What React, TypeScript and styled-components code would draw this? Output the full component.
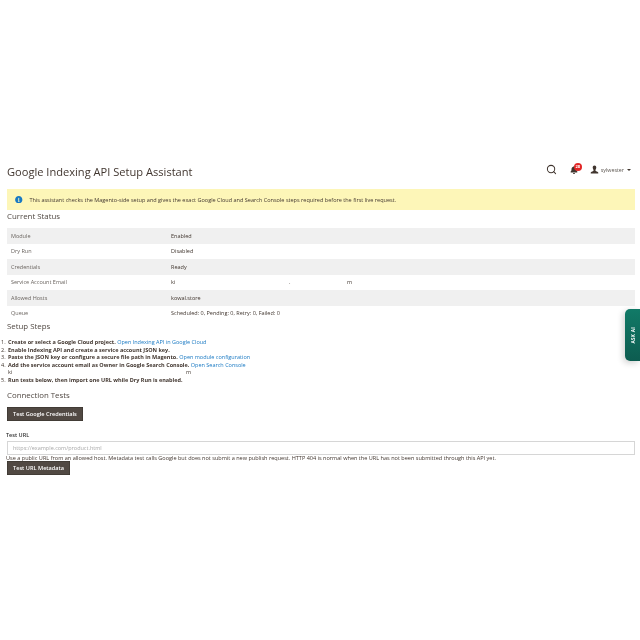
import styled, { createGlobalStyle } from 'styled-components';
import { FaBell, FaInfoCircle } from 'react-icons/fa';
import { Search } from 'lucide-react';

const GlobalStyle = createGlobalStyle`
    html, body { margin: 0; padding: 0; background: #fff; }
    body { font-family: "Open Sans", "Liberation Sans", sans-serif; color: #41362f; }
`;

const Page = styled.div`
    position: relative;
    width: 640px;
    height: 640px;
    box-sizing: border-box;
    padding: 160px 5px 0 7px;
    overflow: hidden;
    filter: blur(0.3px);
`;

const Header = styled.header`
    display: flex;
    align-items: center;
    justify-content: space-between;
    height: 23px;
    margin-bottom: 6px;
`;

const Title = styled.h1`
    margin: 0;
    font-size: 11.1px;
    line-height: 23px;
    font-weight: 400;
    color: #41362f;
`;

const Actions = styled.div`
    display: flex;
    align-items: center;
    margin-top: -4px;
    margin-right: 4px;
`;

const SearchIcon = styled(Search)`
    width: 11px;
    height: 11px;
    margin-right: 13px;
    color: #41362f;
`;

const Bell = styled.div`
    position: relative;
    display: flex;
    width: 12px;
    margin-right: 8px;
    color: #41362f;
    font-size: 8px;
`;

const Badge = styled.span`
    position: absolute;
    top: -2.5px;
    left: 4px;
    width: 8px;
    height: 8px;
    border-radius: 50%;
    background: #e22626;
    color: #fff;
    font-size: 4px;
    font-weight: 700;
    line-height: 8px;
    text-align: center;
`;

const UserName = styled.span`
    display: flex;
    align-items: center;
    gap: 2px;
    font-size: 5.3px;
    color: #5c5650;
`;

const Caret = styled.i`
    width: 0;
    height: 0;
    margin-left: 1px;
    border-left: 2px solid transparent;
    border-right: 2px solid transparent;
    border-top: 2.5px solid #41362f;
`;

const Notice = styled.div`
    display: flex;
    align-items: center;
    height: 21px;
    padding-left: 8px;
    background: #fdf6b8;
    font-size: 5.54px;
    color: #41362f;
    svg { font-size: 7.5px; color: #1979c3; margin-right: 7px; }
`;

const SectionTitle = styled.h2<{ $top: number; $bottom: number }>`
    margin: ${p => p.$top}px 0 ${p => p.$bottom}px;
    font-size: 7.85px;
    line-height: 11px;
    font-weight: 400;
    color: #514943;
`;

const StatusTable = styled.div`
    display: grid;
    grid-template-columns: 164px 1fr;
`;

const Row = styled.div<{ $shaded: boolean }>`
    display: grid;
    grid-column: 1 / -1;
    grid-template-columns: 160px 1fr;
    align-items: center;
    height: 15.5px;
    padding-left: 4px;
    font-size: 5.5px;
    color: #41362f;
    background: ${p => (p.$shaded ? '#f0f0f0' : '#fff')};
    & > span:first-child { color: #6b6560; }
`;

const Masked = styled.span<{ $width: number }>`
    position: relative;
    display: inline-block;
    width: ${p => p.$width}px;
`;

const MaskedEnd = styled.span<{ $at: number }>`
    position: absolute;
    left: ${p => p.$at}px;
    top: 0;
`;

const Steps = styled.ol`
    margin: 7px 0 0;
    padding: 0 0 0 1px;
    list-style: none;
    counter-reset: step;
    font-size: 5.5px;
    line-height: 7.6px;
    color: #41362f;
    font-weight: 700;
`;

const Step = styled.li`
    position: relative;
    counter-increment: step;
    &::before {
        content: counter(step) ".";
        position: absolute;
        left: -7px;
        font-weight: 400;
    }
`;

const StepLink = styled.a`
    color: #1979c3;
    font-weight: 400;
    text-decoration: none;
`;

const MaskedLine = styled.div`
    font-weight: 400;
`;

const DarkButton = styled.button`
    display: block;
    height: 14px;
    padding: 0 6px;
    border: 0;
    background: #514943;
    box-shadow: inset 0 0 0 0.5px #35302b;
    color: #fff;
    font-family: inherit;
    font-size: 5.6px;
    font-weight: 600;
`;

const FieldLabel = styled.label`
    display: block;
    margin: 11px 0 2px -1px;
    font-size: 5.5px;
    line-height: 7px;
    font-weight: 600;
    color: #303030;
`;

const UrlInput = styled.input`
    display: block;
    width: 100%;
    height: 14px;
    box-sizing: border-box;
    padding: 0 5px;
    border: 0.6px solid #d6d6d6;
    background: #fff;
    font-family: inherit;
    font-size: 5.5px;
    outline: none;
    &::placeholder { color: #a8a8a8; }
`;

const Hint = styled.p`
    margin: 0 0 0 -1px;
    font-size: 5.56px;
    line-height: 6px;
    color: #41362f;
    white-space: nowrap;
`;

const AskAi = styled.div`
    position: absolute;
    top: 309px;
    right: 0;
    display: flex;
    align-items: center;
    justify-content: center;
    width: 15px;
    height: 52px;
    border-radius: 5px 0 0 5px;
    background: linear-gradient(180deg, #117a67, #0d5c50);
    box-shadow: -2px 2px 6px rgba(0, 0, 0, 0.18);
    color: #fff;
    font-size: 4.6px;
    font-weight: 700;
    letter-spacing: 0.3px;
    writing-mode: vertical-rl;
    & > span { transform: rotate(180deg); }
`;

function UserIcon() {
    return (
        <svg width="9" height="9" viewBox="0 0 18 18" fill="#41362f">
            <path d="M9 1c2.2 0 3.6 1.7 3.6 4.2 0 2-.8 3.6-1.7 4.6v1.4c0 .8 1 1.2 2.6 1.8 1.7.6 3 1.2 3 2.5V17H1.5v-1.5c0-1.3 1.3-1.9 3-2.5 1.6-.6 2.6-1 2.6-1.8V9.800c-.9-1-1.700-2.600-1.700-4.600C5.400 2.700 6.800 1 9 1z" />
        </svg>
    );
}

const rows: [string, React.ReactNode][] = [
    ['Module', 'Enabled'],
    ['Dry Run', 'Disabled'],
    ['Credentials', 'Ready'],
    ['Service Account Email', <Masked $width={180}>ki<MaskedEnd $at={118}>.</MaskedEnd><MaskedEnd $at={176}>m</MaskedEnd></Masked>],
    ['Allowed Hosts', 'kowal.store'],
    ['Queue', 'Scheduled: 0, Pending: 0, Retry: 0, Failed: 0'],
];

export default function App() {
    return (
        <>
            <GlobalStyle />
            <Page>
                <Header>
                    <Title>Google Indexing API Setup Assistant</Title>
                    <Actions>
                        <SearchIcon strokeWidth={2.2} />
                        <Bell><FaBell /><Badge>28</Badge></Bell>
                        <UserName><UserIcon />sylwester<Caret /></UserName>
                    </Actions>
                </Header>
                <Notice>
                    <FaInfoCircle />
                    This assistant checks the Magento-side setup and gives the exact Google Cloud and Search Console steps required before the first live request.
                </Notice>
                <SectionTitle $top={1} $bottom={6}>Current Status</SectionTitle>
                <StatusTable>
                    {rows.map(([name, value], i) => (
                        <Row key={name} $shaded={i % 2 === 0}>
                            <span>{name}</span>
                            <span>{value}</span>
                        </Row>
                    ))}
                </StatusTable>
                <SectionTitle $top={0} $bottom={5}>Setup Steps</SectionTitle>
                <Steps>
                    <Step>Create or select a Google Cloud project. <StepLink href="#">Open Indexing API in Google Cloud</StepLink></Step>
                    <Step>Enable Indexing API and create a service account JSON key.</Step>
                    <Step>Paste the JSON key or configure a secure file path in Magento. <StepLink href="#">Open module configuration</StepLink></Step>
                    <Step>
                        Add the service account email as Owner in Google Search Console. <StepLink href="#">Open Search Console</StepLink>
                        <MaskedLine><Masked $width={180}>ki<MaskedEnd $at={178}>m</MaskedEnd></Masked></MaskedLine>
                    </Step>
                    <Step>Run tests below, then import one URL while Dry Run is enabled.</Step>
                </Steps>
                <SectionTitle $top={5} $bottom={6}>Connection Tests</SectionTitle>
                <DarkButton>Test Google Credentials</DarkButton>
                <FieldLabel>Test URL</FieldLabel>
                <UrlInput placeholder="https://example.com/product.html" />
                <Hint>Use a public URL from an allowed host. Metadata test calls Google but does not submit a new publish request. HTTP 404 is normal when the URL has not been submitted through this API yet.</Hint>
                <DarkButton>Test URL Metadata</DarkButton>
                <AskAi><span>ASK AI</span></AskAi>
            </Page>
        </>
    );
}
